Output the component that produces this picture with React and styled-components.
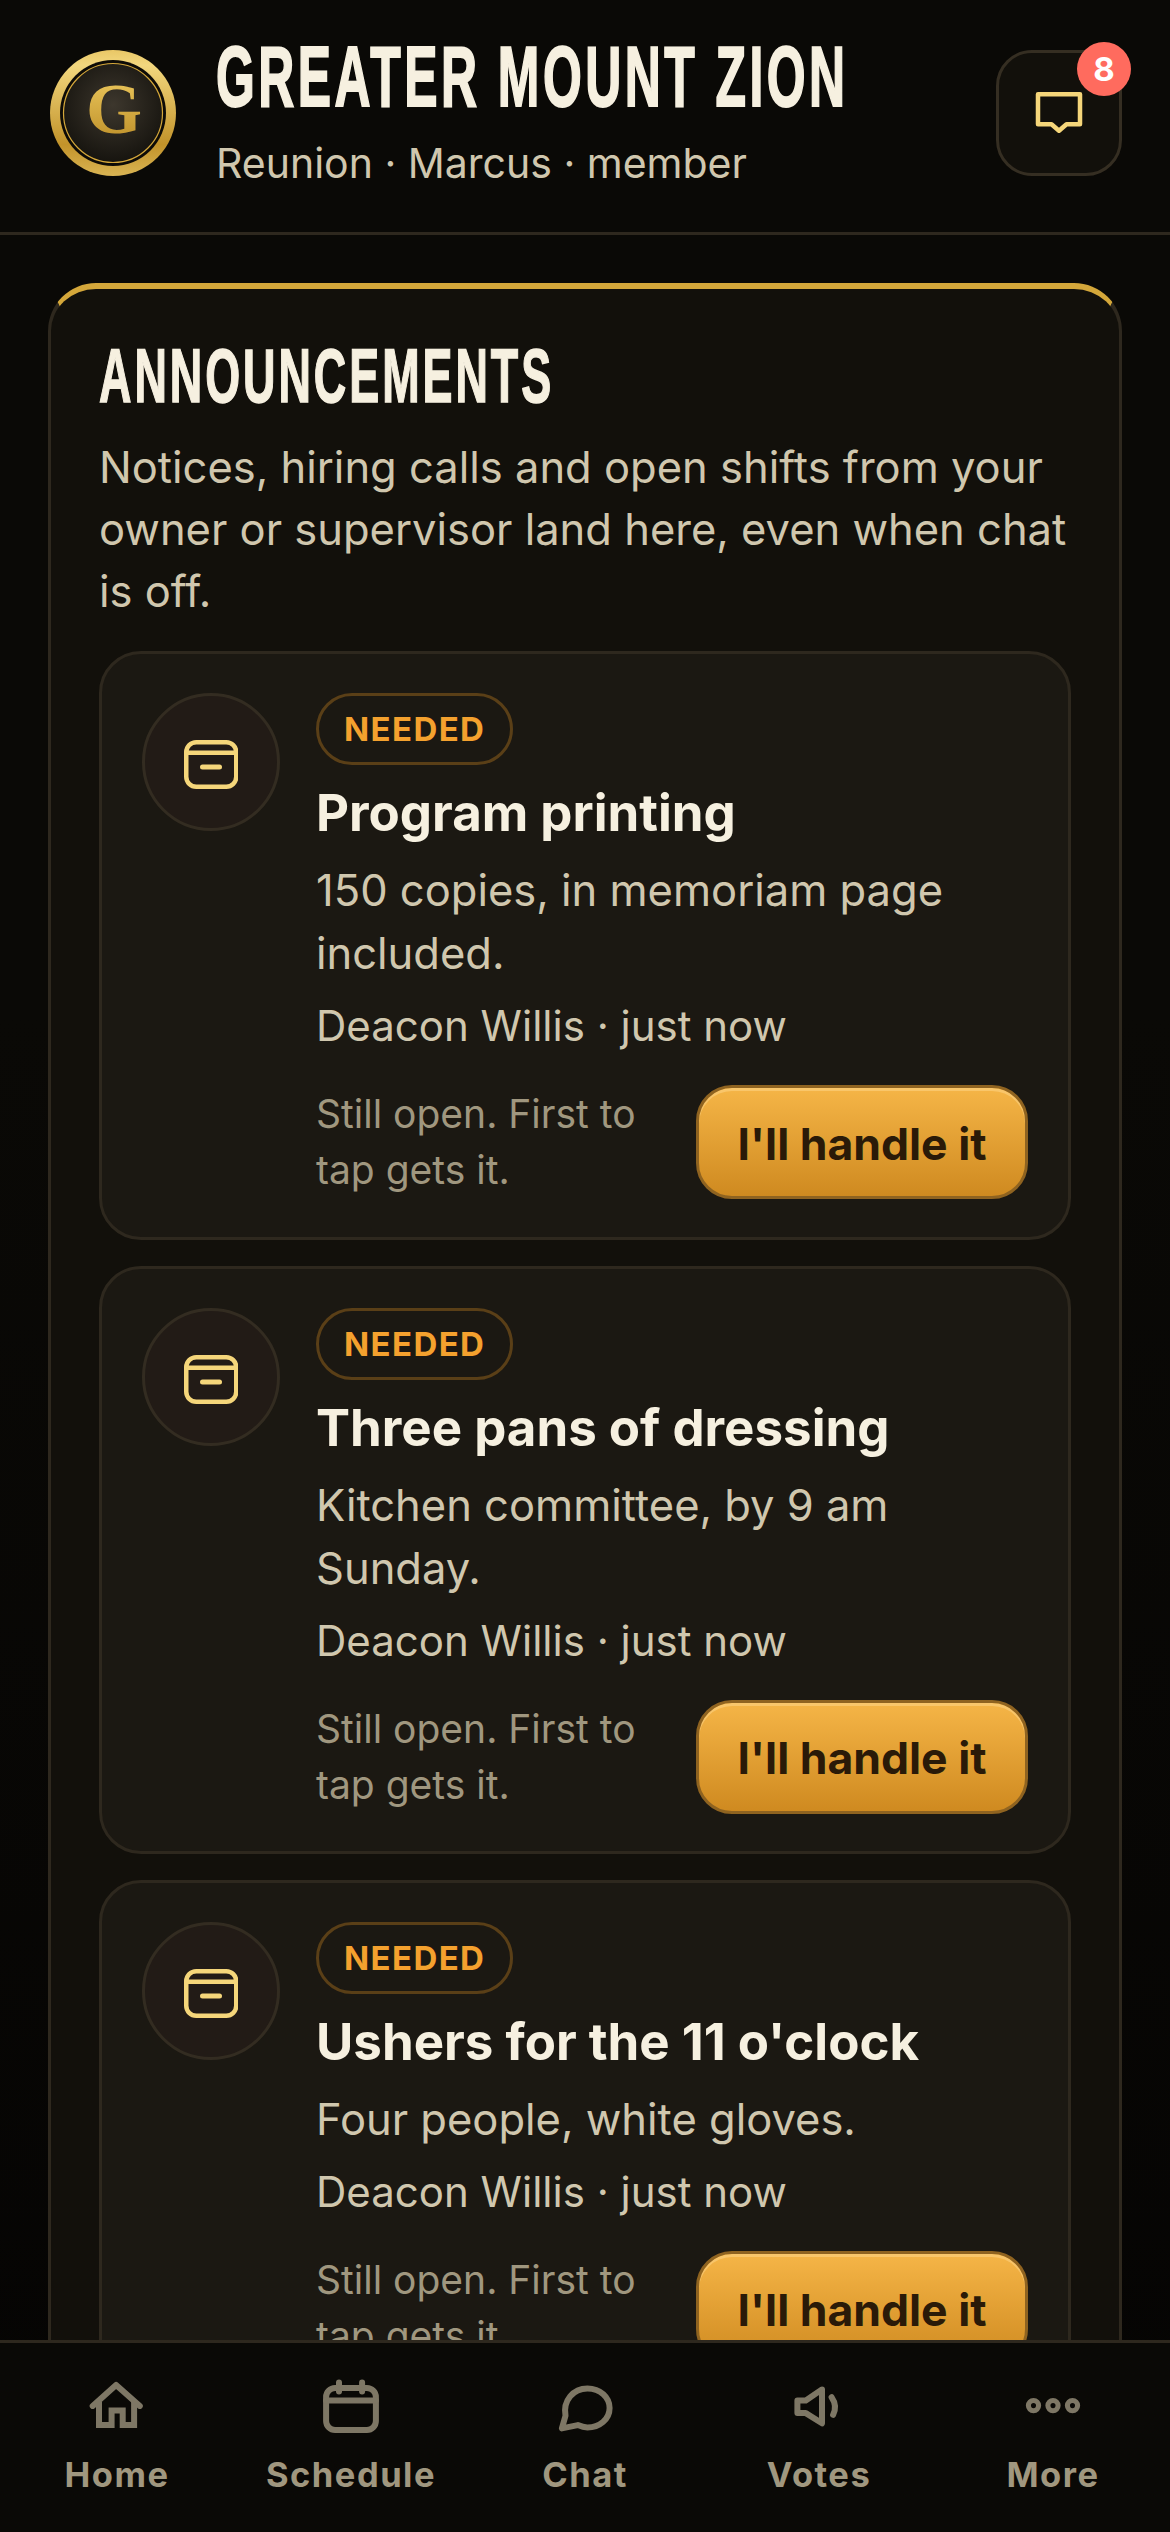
import React from "react";
import styled, { createGlobalStyle } from "styled-components";

const GlobalStyle = createGlobalStyle`
  html, body {
    margin: 0;
    padding: 0;
    background: #0a0906;
  }
  * {
    box-sizing: border-box;
  }
`;

const Shell = styled.div`
  width: 1170px;
  height: 2532px;
  display: flex;
  flex-direction: column;
  overflow: hidden;
  background: linear-gradient(180deg, #0a0906 0%, #0a0906 40%, #050403 100%);
  font-family: Inter, "Liberation Sans", sans-serif;
  color: #f6f0e0;
`;

const Header = styled.header`
  height: 235px;
  flex: none;
  display: flex;
  align-items: flex-start;
  padding: 50px 48px 0 50px;
  background: #0a0906;
  border-bottom: 3px solid #2e281e;
`;

const Logo = styled.svg`
  width: 126px;
  height: 126px;
  flex: none;
`;

const Brand = styled.div`
  flex: 1;
  min-width: 0;
  margin-left: 40px;
  margin-top: -26px;
`;

const BrandName = styled.h1`
  margin: 0;
  width: 627px;
  font-family: "Liberation Sans", sans-serif;
  font-weight: 700;
  font-size: 86px;
  line-height: 104px;
  letter-spacing: 6px;
  color: #f6f0e0;
  white-space: nowrap;
  -webkit-text-stroke: 2px #f6f0e0;
  transform: scaleX(0.58);
  transform-origin: left center;
`;

const BrandSub = styled.div`
  margin-top: 8px;
  font-size: 41px;
  line-height: 54px;
  color: #d0c7ae;
`;

const ChatButton = styled.button`
  position: relative;
  width: 126px;
  height: 126px;
  flex: none;
  display: flex;
  align-items: center;
  justify-content: center;
  padding: 0;
  border: 3px solid #352e22;
  border-radius: 36px;
  background: #12100b;
`;

const Badge = styled.span`
  position: absolute;
  top: -11px;
  right: -12px;
  width: 54px;
  height: 54px;
  border-radius: 50%;
  display: flex;
  align-items: center;
  justify-content: center;
  background: #ff6b5e;
  color: #fff;
  font-family: Inter, sans-serif;
  font-weight: 700;
  font-size: 33px;
`;

const Main = styled.main`
  flex: 1;
  min-height: 0;
  overflow: hidden;
  padding: 48px 48px 0;
`;

const Panel = styled.section`
  width: 1074px;
  padding: 43px 48px 48px;
  border: 3px solid #2e281e;
  border-top: 6px solid #d4a73a;
  border-radius: 48px;
  background: #12100b;
`;

const PanelTitle = styled.h2`
  margin: 0;
  width: 450px;
  font-family: "Liberation Sans", sans-serif;
  font-weight: 700;
  font-size: 76px;
  line-height: 88px;
  letter-spacing: 5px;
  color: #f6f0e0;
  white-space: nowrap;
  -webkit-text-stroke: 1.5px #f6f0e0;
  transform: scaleX(0.591);
  transform-origin: left center;
`;

const PanelText = styled.p`
  margin: 16px 0 0;
  font-size: 43.5px;
  line-height: 62px;
  color: #d0c7ae;
`;

const CardList = styled.div`
  display: flex;
  flex-direction: column;
  gap: 26px;
  margin-top: 29px;
`;

const Card = styled.article`
  display: flex;
  align-items: flex-start;
  gap: 36px;
  padding: 39px 40px 37.5px;
  border: 3px solid #2e281e;
  border-radius: 42px;
  background: #1b1812;
`;

const IconCircle = styled.div`
  width: 138px;
  height: 138px;
  flex: none;
  display: flex;
  align-items: center;
  justify-content: center;
  border: 3px solid #332c21;
  border-radius: 50%;
  background: #221b16;
`;

const CardBody = styled.div`
  flex: 1;
  min-width: 0;
`;

const Tag = styled.span`
  display: inline-flex;
  align-items: center;
  height: 72px;
  padding: 0 25px;
  border: 3px solid #5a3f17;
  border-radius: 36px;
  color: #f4a12e;
  font-weight: 700;
  font-size: 33px;
  letter-spacing: 1.4px;
`;

const CardTitle = styled.h3`
  margin: 12px 0 0;
  font-weight: 700;
  font-size: 51px;
  line-height: 72px;
  color: #f6f0e0;
`;

const CardText = styled.p`
  margin: 10px 0 0;
  font-size: 43.5px;
  line-height: 63px;
  color: #d0c7ae;
`;

const CardMeta = styled.div`
  margin-top: 13px;
  font-size: 42px;
  line-height: 56px;
  color: #d0c7ae;
`;

const CardFooter = styled.div`
  display: flex;
  align-items: center;
  gap: 36px;
  margin-top: 31px;
`;

const FooterNote = styled.div`
  flex: 1;
  font-size: 39px;
  line-height: 56px;
  color: #a0977f;
`;

const ActionButton = styled.button`
  width: 332px;
  height: 114px;
  flex: none;
  padding: 3px 0 0;
  border: 3px solid #8f6320;
  border-radius: 36px;
  background: linear-gradient(180deg, #f5b547 0%, #cf8a20 100%);
  box-shadow: inset 0 3px 0 rgba(255, 220, 150, 0.45);
  color: #2a1a08;
  font-family: Inter, sans-serif;
  font-weight: 700;
  font-size: 44.5px;
`;

const TabBar = styled.nav`
  height: 192px;
  flex: none;
  display: grid;
  grid-template-columns: repeat(5, 1fr);
  padding-top: 32px;
  background: #0a0906;
  border-top: 3px solid #2e281e;
`;

const Tab = styled.div`
  display: flex;
  flex-direction: column;
  align-items: center;
  color: #7e7765;
`;

const TabLabel = styled.span`
  margin-top: 6px;
  font-weight: 700;
  font-size: 34.5px;
  line-height: 44px;
  letter-spacing: 1.5px;
  color: #a0977f;
`;

const ChatSquareIcon = () => (
  <svg width="54" height="54" viewBox="0 0 54 54" fill="none" stroke="#f5d67a" strokeWidth="4.5" strokeLinejoin="round" strokeLinecap="round">
    <path d="M6 8.250h42v30H34.500l-7.500 6.500-7.500-6.500H6z" />
  </svg>
);

const ArchiveIcon = () => (
  <svg width="54" height="54" viewBox="0 0 54 54" fill="none" stroke="#f5d67a" strokeWidth="4.5" strokeLinecap="round">
    <rect x="2.250" y="7.250" width="50" height="44.500" rx="10" />
    <path d="M2.500 17.700h49.500" />
    <path d="M18.500 32h17" strokeWidth="5" />
  </svg>
);

const tabIconProps = {
  width: 72,
  height: 72,
  viewBox: "0 0 24 24",
  fill: "none",
  stroke: "currentColor",
  strokeWidth: 2,
  strokeLinecap: "round",
  strokeLinejoin: "round",
};

const HomeIcon = () => (
  <svg {...tabIconProps}>
    <path d="M3.900 10.300 11.700 3.300l7.900 7" />
    <path d="M6 9V16.700H10.200V11.800H13.900V16.700H17.700V9" strokeLinejoin="miter" strokeLinecap="butt" />
  </svg>
);

const CalendarIcon = () => (
  <svg {...tabIconProps}>
    <rect x="3.700" y="4.300" width="16.600" height="14" rx="3" />
    <path d="M3.700 8.500h16.600M8 2.500v3M15.700 2.500v3" />
  </svg>
);

const BubbleIcon = () => (
  <svg {...tabIconProps}>
    <path d="M4.300 17.800 5.500 13.600C4.600 8.500 8.100 4.500 12.800 4.500 17.100 4.500 20.200 7.500 20.200 11 20.200 14.800 16.800 17.500 12.800 17.500 11.500 17.500 10.500 17.100 9.600 16.700z" />
  </svg>
);

const SpeakerIcon = () => (
  <svg {...tabIconProps}>
    <path d="M13 4.800 7.600 8.500H4.800V12.700H7.600L13 16.100z" />
    <path d="M16.200 7.400Q18.200 10.300 16.700 13.300" />
  </svg>
);

const DotsIcon = () => (
  <svg {...tabIconProps} strokeWidth={1.7}>
    <circle cx="5.500" cy="10.200" r="1.700" />
    <circle cx="12" cy="10.200" r="1.700" />
    <circle cx="18.500" cy="10.200" r="1.700" />
  </svg>
);

const announcements = [
  { title: "Program printing", text: "150 copies, in memoriam page included." },
  { title: "Three pans of dressing", text: "Kitchen committee, by 9 am Sunday." },
  { title: "Ushers for the 11 o'clock", text: "Four people, white gloves." },
];

const tabs = [
  { label: "Home", Icon: HomeIcon },
  { label: "Schedule", Icon: CalendarIcon },
  { label: "Chat", Icon: BubbleIcon },
  { label: "Votes", Icon: SpeakerIcon },
  { label: "More", Icon: DotsIcon },
];

const App = () => {
  return (
    <Shell>
      <GlobalStyle />
      <Header>
        <Logo viewBox="0 0 126 126">
          <defs>
            <linearGradient id="ring" x1="0" y1="0" x2="0" y2="1">
              <stop offset="0" stopColor="#e9c766" />
              <stop offset="0.12" stopColor="#f2d77e" />
              <stop offset="0.75" stopColor="#c2932a" />
              <stop offset="1" stopColor="#d9b453" />
            </linearGradient>
            <radialGradient id="coin" cx="0.5" cy="0.42" r="0.6">
              <stop offset="0" stopColor="#3d372d" />
              <stop offset="1" stopColor="#15130e" />
            </radialGradient>
            <linearGradient id="letter" x1="0" y1="0" x2="0" y2="1">
              <stop offset="0" stopColor="#f0cd62" />
              <stop offset="1" stopColor="#b98a24" />
            </linearGradient>
          </defs>
          <circle cx="63" cy="63" r="63" fill="url(#ring)" />
          <circle cx="63" cy="63" r="53" fill="#0d0b07" />
          <circle cx="63" cy="63" r="49.500" fill="url(#coin)" stroke="#d4a73a" strokeWidth="1.200" />
          <text x="64" y="83" textAnchor="middle" fontFamily="'Liberation Serif', serif" fontWeight="700" fontSize="72" fill="url(#letter)">G</text>
        </Logo>
        <Brand>
          <BrandName>GREATER MOUNT ZION</BrandName>
          <BrandSub>Reunion · Marcus · member</BrandSub>
        </Brand>
        <ChatButton aria-label="Messages">
          <ChatSquareIcon />
          <Badge>8</Badge>
        </ChatButton>
      </Header>
      <Main>
        <Panel>
          <PanelTitle>ANNOUNCEMENTS</PanelTitle>
          <PanelText>
            Notices, hiring calls and open shifts from your owner or supervisor land here, even when chat is off.
          </PanelText>
          <CardList>
            {announcements.map((item) => (
              <Card key={item.title}>
                <IconCircle>
                  <ArchiveIcon />
                </IconCircle>
                <CardBody>
                  <Tag>NEEDED</Tag>
                  <CardTitle>{item.title}</CardTitle>
                  <CardText>{item.text}</CardText>
                  <CardMeta>Deacon Willis · just now</CardMeta>
                  <CardFooter>
                    <FooterNote>Still open. First to tap gets it.</FooterNote>
                    <ActionButton>I'll handle it</ActionButton>
                  </CardFooter>
                </CardBody>
              </Card>
            ))}
          </CardList>
        </Panel>
      </Main>
      <TabBar>
        {tabs.map(({ label, Icon }) => (
          <Tab key={label}>
            <Icon />
            <TabLabel>{label}</TabLabel>
          </Tab>
        ))}
      </TabBar>
    </Shell>
  );
};

export default App;
